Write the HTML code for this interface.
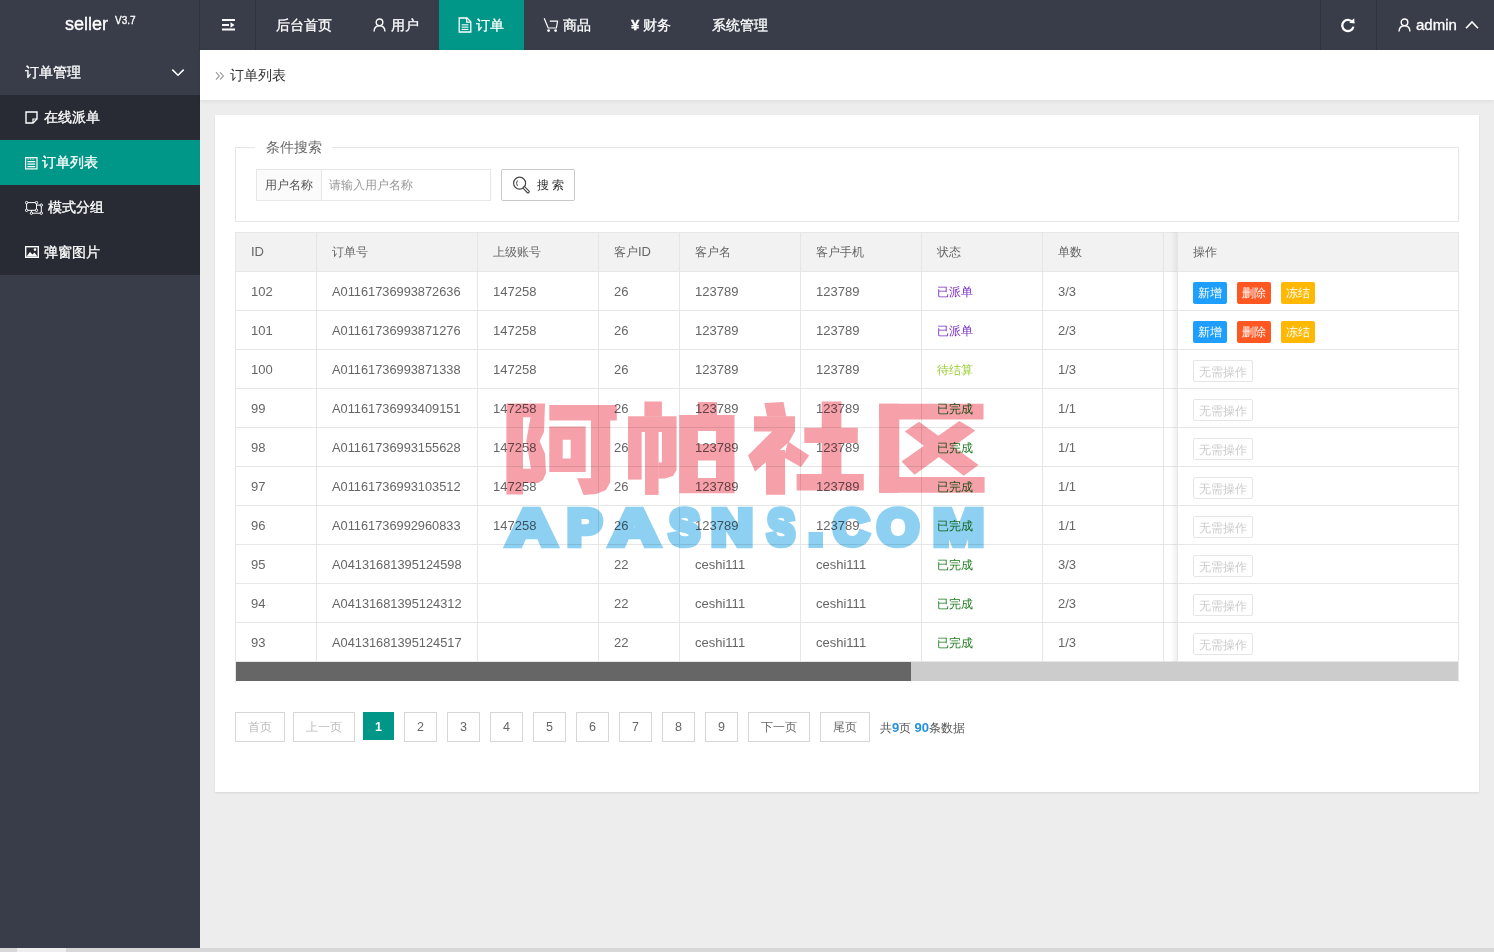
<!DOCTYPE html>
<html><head><meta charset="utf-8">
<style>
*{margin:0;padding:0;box-sizing:border-box}
html,body{width:1494px;height:952px;overflow:hidden}
body{font-family:"Liberation Sans",sans-serif;background:#ededed;position:relative;color:#666;font-size:14px}
div,span,svg{position:absolute}
b{font-weight:normal}
#header{left:0;top:0;width:1494px;height:50px;background:#393D49}
.logo{left:65px;top:0;height:50px;width:120px;color:#fff}
.lg1{left:0;top:13px;font-size:18px;line-height:22px;-webkit-text-stroke:0.35px #fff}
.lg2{left:50px;top:16px;font-size:10px;line-height:10px;-webkit-text-stroke:0.3px #fff}
.hsep{top:0;width:1px;height:50px;background:#30333c}
.nav{top:0;height:50px;line-height:50px;color:#fff;font-size:14px;white-space:nowrap;-webkit-text-stroke:0.3px #fff}
.navact{left:439px;top:0;width:85px;height:50px;background:#009688}
.yen{font-weight:bold;font-size:15px}
.admin{font-size:15px}
.ic{display:block}
#side{left:0;top:50px;width:200px;height:898px;background:#393D49}
.subbg{left:0;top:45px;width:200px;height:180px;background:#282B33}
.sitem{left:0;width:200px;height:45px;line-height:45px;color:#fff;font-size:14px;white-space:nowrap;-webkit-text-stroke:0.3px #fff}
#crumb{left:200px;top:50px;width:1294px;height:50px;background:#fff;box-shadow:0 1px 4px rgba(0,0,0,.08)}
.raquo{left:14px;top:-1px;line-height:50px;font-size:19px;color:#999}
.crt{left:30px;top:0;line-height:50px;font-size:14px;color:#333}
#card{left:215px;top:115px;width:1264px;height:677px;background:#fff;box-shadow:0 1px 2px rgba(0,0,0,.1)}
.fs{left:235px;top:147px;width:1224px;height:75px;border:1px solid #e6e6e6}
.legend{left:255px;top:137px;width:77px;height:20px;line-height:20px;background:#fff;padding-left:11px;font-size:14px;color:#666}
.ilabel{left:256px;top:169px;width:66px;height:32px;line-height:30px;border:1px solid #e6e6e6;background:#fbfbfb;font-size:12px;color:#555;padding-left:8px}
.iinput{left:321px;top:169px;width:170px;height:32px;line-height:30px;border:1px solid #e6e6e6;border-left:none;font-size:12px;color:#999;padding-left:8px}
.sbtn{left:501px;top:169px;width:74px;height:32px;border:1px solid #c9c9c9;border-radius:2px;background:#fff}
.stxt{left:35px;top:0;line-height:30px;font-size:12px;color:#333}
.thead{left:235px;top:232px;width:1224px;height:40px;background:#f2f2f2;border-top:1px solid #e6e6e6;border-bottom:1px solid #e6e6e6}
.th{top:233px;height:38px;line-height:38px;font-size:12px;color:#666;white-space:nowrap}
.lat{font-size:13px}
.td{height:38px;line-height:38px;font-size:13px;color:#666;white-space:nowrap}
.st-p{font-size:12px;color:#7a2fc4}
.st-y{font-size:12px;color:#9acd32}
.st-g{font-size:12px;color:#1e7b1e}
.hl{left:235px;width:1224px;height:1px;background:#e6e6e6}
.vl{top:232px;width:1px;height:430px;background:#e6e6e6}
.fixshadow{left:1177px;top:232px;width:282px;height:430px;border-left:1px solid #e6e6e6}
.fixshadow:before{content:"";position:absolute;left:-7px;top:0;width:6px;height:100%;background:linear-gradient(to left,rgba(0,0,0,.06),rgba(0,0,0,0))}
.tborder{left:235px;top:232px;width:1224px;height:450px;border-left:1px solid #e6e6e6;border-right:1px solid #e6e6e6}
.obtn{width:34px;height:22px;line-height:23px;text-align:center;font-size:12px;color:#fff;border-radius:2px}
.nobtn{width:60px;height:22px;line-height:22px;text-align:center;font-size:12px;color:#ccc;border:1px solid #e6e6e6;border-radius:2px;background:#fff}
.sbar{left:236px;top:662px;width:1222px;height:19px;background:#cccccc}
.sthumb{left:0;top:0;width:675px;height:19px;background:#666}
.pg{top:712px;height:30px;line-height:29px;border:1px solid #d6d6d6;text-align:center;font-size:12.5px;color:#666;background:#fff}
.pcj{font-size:12px}
.pg.dis{color:#bbb}
.pg.cur{background:#009688;color:#fff;border-color:#009688;height:28px;line-height:28px;font-weight:bold}
.pinfo{left:880px;top:713px;line-height:30px;font-size:12px;color:#555;white-space:nowrap}
.pinfo b{position:static;color:#2390e0;font-weight:bold;font-size:13px}
.wm1{left:500px;top:395px;font-size:98px;line-height:100px;font-weight:900;color:#f59aa5;mix-blend-mode:multiply;white-space:nowrap;letter-spacing:2px}
.wm2{left:505px;top:497px;font-size:62px;line-height:62px;font-weight:bold;color:#8fd3f4;mix-blend-mode:multiply;white-space:nowrap}
.hscroll{left:0;top:948px;width:1494px;height:4px;background:#d7d7d7}
.hthumb{left:17px;top:0;width:49px;height:4px;background:#eeeeee}
.td,.th{}
.wm{left:0;top:0;mix-blend-mode:multiply;pointer-events:none}

.ono{font-size:12.8px}

</style></head><body>
<div id="header"><div class="logo"><span class="lg1">seller</span><span class="lg2">V3.7</span></div><div class="hsep" style="left:199px"></div><div class="hsep" style="left:255px"></div><div class="hsep" style="left:1320px"></div><div class="hsep" style="left:1376px"></div><svg class="ic" style="left:221px;top:18px" width="15" height="14" viewBox="0 0 15 14"><rect x="1" y="1" width="13" height="2" fill="#fff"/><rect x="1" y="6" width="7" height="2" fill="#fff"/><path d="M9.5 4.3 L13.5 7 L9.5 9.7 Z" fill="#fff"/><rect x="1" y="10.5" width="13" height="2" fill="#fff"/></svg><div class="nav" style="left:276px">后台首页</div><svg class="ic" style="left:373px;top:18px" width="13" height="14" viewBox="0 0 13 14"><circle cx="6.5" cy="4.3" r="3.3" fill="none" stroke="#fff" stroke-width="1.4"/><path d="M1 13.5 C1.3 9.5 3.5 7.8 6.5 7.8 C9.5 7.8 11.7 9.5 12 13.5" fill="none" stroke="#fff" stroke-width="1.4"/></svg><div class="nav" style="left:391px">用户</div><div class="navact"></div><svg class="ic" style="left:458px;top:17px" width="14" height="16" viewBox="0 0 14 16"><path d="M1.2 1 H9 L12.8 4.8 V15 H1.2 Z" fill="none" stroke="#fff" stroke-width="1.3"/><path d="M8.6 1 V5.2 H12.8" fill="none" stroke="#fff" stroke-width="1.2"/><rect x="3.6" y="7.3" width="6.8" height="1.1" fill="#fff"/><rect x="3.6" y="9.6" width="6.8" height="1.1" fill="#fff"/><rect x="3.6" y="11.9" width="6.8" height="1.1" fill="#fff"/></svg><div class="nav" style="left:476px">订单</div><svg class="ic" style="left:543px;top:17px" width="16" height="16" viewBox="0 0 16 16"><path d="M1.2 1.2 L5.2 11 H13.4 L14.6 4.2 H6.8" fill="none" stroke="#fff" stroke-width="1.2" stroke-linejoin="round"/><circle cx="5.6" cy="13.6" r="1.4" fill="#fff"/><circle cx="12.6" cy="13.6" r="1.4" fill="#fff"/></svg><div class="nav" style="left:563px">商品</div><div class="nav yen" style="left:631px">¥</div><div class="nav" style="left:643px">财务</div><div class="nav" style="left:712px">系统管理</div><svg class="ic" style="left:1340px;top:17px" width="16" height="16" viewBox="0 0 16 16"><path d="M12.6 5.5 A5.6 5.6 0 1 0 13.4 9.6" fill="none" stroke="#fff" stroke-width="2.3"/><path d="M9.2 5.8 L14.6 6.6 L14.2 1.2 Z" fill="#fff"/></svg><svg class="ic" style="left:1398px;top:18px" width="13" height="14" viewBox="0 0 13 14"><circle cx="6.5" cy="4.3" r="3.3" fill="none" stroke="#fff" stroke-width="1.4"/><path d="M1 13.5 C1.3 9.5 3.5 7.8 6.5 7.8 C9.5 7.8 11.7 9.5 12 13.5" fill="none" stroke="#fff" stroke-width="1.4"/></svg><div class="nav admin" style="left:1416px">admin</div><svg class="ic" style="left:1465px;top:20px" width="14" height="10" viewBox="0 0 14 10"><path d="M1 8.3 L7 2 L13 8.3" fill="none" stroke="#fff" stroke-width="1.6"/></svg></div><div id="side"><div class="sitem" style="top:0;background:#393D49"><span style="position:absolute;left:25px">订单管理</span></div><svg class="ic" style="left:171px;top:18px" width="14" height="9" viewBox="0 0 14 9"><path d="M1.3 1.6 L7 7.3 L12.7 1.6" fill="none" stroke="#fff" stroke-width="1.5"/></svg><div class="subbg"></div><div class="sitem" style="top:45px"><svg class="ic" style="left:25px;top:16px" width="13" height="13" viewBox="0 0 13 13"><path d="M1 1 H12 V8 L8 12 H1 Z" fill="none" stroke="#fff" stroke-width="1.4"/><path d="M8 12 V8 H12" fill="none" stroke="#fff" stroke-width="1.2"/></svg><span style="position:absolute;left:44px">在线派单</span></div><div class="sitem" style="top:90px;background:#009688"><svg class="ic" style="left:25px;top:16.5px" width="13" height="13" viewBox="0 0 13 13"><rect x="0.6" y="0.7" width="11.4" height="11.2" fill="none" stroke="#fff" stroke-width="1.2"/><path d="M2.6 2.1 H10" stroke="#fff" stroke-width="1" stroke-dasharray="1.2 1.2"/><path d="M2.4 4.6 H10.2 M2.4 7.1 H10.2 M2.4 9.6 H10.2" stroke="#fff" stroke-width="1.1"/></svg><span style="position:absolute;left:42px">订单列表</span></div><div class="sitem" style="top:135px"><svg class="ic" style="left:25px;top:16px" width="18" height="14" viewBox="0 0 18 14"><path d="M1.6 1.6 H11.5 V9.3 H1.6 Z M11.5 4.1 H16.3 V12.2 H6.4 V9.3" fill="none" stroke="#fff" stroke-width="1"/><g fill="#282B33" stroke="#fff" stroke-width="1"><circle cx="1.6" cy="1.6" r="1.2"/><circle cx="11.5" cy="1.6" r="1.2"/><circle cx="1.6" cy="9.3" r="1.2"/><circle cx="11.5" cy="9.3" r="1.2"/><circle cx="16.3" cy="4.1" r="1.2"/><circle cx="6.4" cy="12.2" r="1.2"/><circle cx="16.3" cy="12.2" r="1.2"/></g></svg><span style="position:absolute;left:48px">模式分组</span></div><div class="sitem" style="top:180px"><svg class="ic" style="left:25px;top:16px" width="14" height="12" viewBox="0 0 14 12"><rect x="0.7" y="0.7" width="12.6" height="10.6" fill="none" stroke="#fff" stroke-width="1.4"/><path d="M1.5 10.5 L5 6 L7.5 8.5 L9.5 6.5 L12.5 10.5 Z" fill="#fff"/><circle cx="10" cy="3.6" r="1.3" fill="#fff"/></svg><span style="position:absolute;left:44px">弹窗图片</span></div></div><div id="crumb"><svg class="ic" style="left:15px;top:21px" width="10" height="10" viewBox="0 0 10 10"><path d="M1 1.2 L4.3 4.9 L1 8.6 M5 1.2 L8.3 4.9 L5 8.6" fill="none" stroke="#999" stroke-width="1.1"/></svg><span class="crt">订单列表</span></div><div id="card"></div><div class="fs"></div><div class="legend">条件搜索</div><div class="ilabel">用户名称</div><div class="iinput">请输入用户名称</div><div class="sbtn"><svg class="ic" style="left:11px;top:6px" width="18" height="18" viewBox="0 0 18 18"><circle cx="6.6" cy="7.2" r="6" fill="none" stroke="#444" stroke-width="1.2"/><path d="M11.3 11.9 L15 15.7" stroke="#444" stroke-width="3.4" stroke-linecap="round"/><path d="M11.3 11.9 L15 15.7" stroke="#fff" stroke-width="1.2" stroke-linecap="round"/><path d="M4.4 4.5 Q2.7 7.2 4.4 9.9" fill="none" stroke="#444" stroke-width="1"/></svg><span class="stxt">搜 索</span></div><div class="thead"></div><div class="th" style="left:251px"><b class="lat">ID</b></div><div class="th" style="left:332px">订单号</div><div class="th" style="left:493px">上级账号</div><div class="th" style="left:614px">客户<b class="lat">ID</b></div><div class="th" style="left:695px">客户名</div><div class="th" style="left:816px">客户手机</div><div class="th" style="left:937px">状态</div><div class="th" style="left:1058px">单数</div><div class="th" style="left:1193px">操作</div><div class="hl" style="top:310px"></div><div class="td" style="left:251px;top:273px">102</div><div class="td ono" style="left:332px;top:273px">A01161736993872636</div><div class="td" style="left:493px;top:273px">147258</div><div class="td" style="left:614px;top:273px">26</div><div class="td" style="left:695px;top:273px">123789</div><div class="td" style="left:816px;top:273px">123789</div><div class="td st-p" style="left:937px;top:273px">已派单</div><div class="td" style="left:1058px;top:273px">3/3</div><div class="obtn" style="left:1193px;top:282px;background:#1E9FFF">新增</div><div class="obtn" style="left:1237px;top:282px;background:#FF5722">删除</div><div class="obtn" style="left:1281px;top:282px;background:#FFB800">冻结</div><div class="hl" style="top:349px"></div><div class="td" style="left:251px;top:312px">101</div><div class="td ono" style="left:332px;top:312px">A01161736993871276</div><div class="td" style="left:493px;top:312px">147258</div><div class="td" style="left:614px;top:312px">26</div><div class="td" style="left:695px;top:312px">123789</div><div class="td" style="left:816px;top:312px">123789</div><div class="td st-p" style="left:937px;top:312px">已派单</div><div class="td" style="left:1058px;top:312px">2/3</div><div class="obtn" style="left:1193px;top:321px;background:#1E9FFF">新增</div><div class="obtn" style="left:1237px;top:321px;background:#FF5722">删除</div><div class="obtn" style="left:1281px;top:321px;background:#FFB800">冻结</div><div class="hl" style="top:388px"></div><div class="td" style="left:251px;top:351px">100</div><div class="td ono" style="left:332px;top:351px">A01161736993871338</div><div class="td" style="left:493px;top:351px">147258</div><div class="td" style="left:614px;top:351px">26</div><div class="td" style="left:695px;top:351px">123789</div><div class="td" style="left:816px;top:351px">123789</div><div class="td st-y" style="left:937px;top:351px">待结算</div><div class="td" style="left:1058px;top:351px">1/3</div><div class="nobtn" style="left:1193px;top:360px">无需操作</div><div class="hl" style="top:427px"></div><div class="td" style="left:251px;top:390px">99</div><div class="td ono" style="left:332px;top:390px">A01161736993409151</div><div class="td" style="left:493px;top:390px">147258</div><div class="td" style="left:614px;top:390px">26</div><div class="td" style="left:695px;top:390px">123789</div><div class="td" style="left:816px;top:390px">123789</div><div class="td st-g" style="left:937px;top:390px">已完成</div><div class="td" style="left:1058px;top:390px">1/1</div><div class="nobtn" style="left:1193px;top:399px">无需操作</div><div class="hl" style="top:466px"></div><div class="td" style="left:251px;top:429px">98</div><div class="td ono" style="left:332px;top:429px">A01161736993155628</div><div class="td" style="left:493px;top:429px">147258</div><div class="td" style="left:614px;top:429px">26</div><div class="td" style="left:695px;top:429px">123789</div><div class="td" style="left:816px;top:429px">123789</div><div class="td st-g" style="left:937px;top:429px">已完成</div><div class="td" style="left:1058px;top:429px">1/1</div><div class="nobtn" style="left:1193px;top:438px">无需操作</div><div class="hl" style="top:505px"></div><div class="td" style="left:251px;top:468px">97</div><div class="td ono" style="left:332px;top:468px">A01161736993103512</div><div class="td" style="left:493px;top:468px">147258</div><div class="td" style="left:614px;top:468px">26</div><div class="td" style="left:695px;top:468px">123789</div><div class="td" style="left:816px;top:468px">123789</div><div class="td st-g" style="left:937px;top:468px">已完成</div><div class="td" style="left:1058px;top:468px">1/1</div><div class="nobtn" style="left:1193px;top:477px">无需操作</div><div class="hl" style="top:544px"></div><div class="td" style="left:251px;top:507px">96</div><div class="td ono" style="left:332px;top:507px">A01161736992960833</div><div class="td" style="left:493px;top:507px">147258</div><div class="td" style="left:614px;top:507px">26</div><div class="td" style="left:695px;top:507px">123789</div><div class="td" style="left:816px;top:507px">123789</div><div class="td st-g" style="left:937px;top:507px">已完成</div><div class="td" style="left:1058px;top:507px">1/1</div><div class="nobtn" style="left:1193px;top:516px">无需操作</div><div class="hl" style="top:583px"></div><div class="td" style="left:251px;top:546px">95</div><div class="td ono" style="left:332px;top:546px">A04131681395124598</div><div class="td" style="left:614px;top:546px">22</div><div class="td" style="left:695px;top:546px">ceshi111</div><div class="td" style="left:816px;top:546px">ceshi111</div><div class="td st-g" style="left:937px;top:546px">已完成</div><div class="td" style="left:1058px;top:546px">3/3</div><div class="nobtn" style="left:1193px;top:555px">无需操作</div><div class="hl" style="top:622px"></div><div class="td" style="left:251px;top:585px">94</div><div class="td ono" style="left:332px;top:585px">A04131681395124312</div><div class="td" style="left:614px;top:585px">22</div><div class="td" style="left:695px;top:585px">ceshi111</div><div class="td" style="left:816px;top:585px">ceshi111</div><div class="td st-g" style="left:937px;top:585px">已完成</div><div class="td" style="left:1058px;top:585px">2/3</div><div class="nobtn" style="left:1193px;top:594px">无需操作</div><div class="hl" style="top:661px"></div><div class="td" style="left:251px;top:624px">93</div><div class="td ono" style="left:332px;top:624px">A04131681395124517</div><div class="td" style="left:614px;top:624px">22</div><div class="td" style="left:695px;top:624px">ceshi111</div><div class="td" style="left:816px;top:624px">ceshi111</div><div class="td st-g" style="left:937px;top:624px">已完成</div><div class="td" style="left:1058px;top:624px">1/3</div><div class="nobtn" style="left:1193px;top:633px">无需操作</div><div class="vl" style="left:316px"></div><div class="vl" style="left:477px"></div><div class="vl" style="left:598px"></div><div class="vl" style="left:679px"></div><div class="vl" style="left:800px"></div><div class="vl" style="left:921px"></div><div class="vl" style="left:1042px"></div><div class="vl" style="left:1163px"></div><div class="fixshadow"></div><div class="tborder"></div><div class="sbar"><div class="sthumb"></div></div><div class="pg dis pcj" style="left:235px;width:50px">首页</div><div class="pg dis pcj" style="left:293px;width:62px">上一页</div><div class="pg cur" style="left:363px;width:31px">1</div><div class="pg " style="left:404px;width:33px">2</div><div class="pg " style="left:447px;width:33px">3</div><div class="pg " style="left:490px;width:33px">4</div><div class="pg " style="left:533px;width:33px">5</div><div class="pg " style="left:576px;width:33px">6</div><div class="pg " style="left:619px;width:33px">7</div><div class="pg " style="left:662px;width:33px">8</div><div class="pg " style="left:705px;width:33px">9</div><div class="pg  pcj" style="left:748px;width:62px">下一页</div><div class="pg  pcj" style="left:820px;width:50px">尾页</div><div class="pinfo">共<b>9</b>页 <b>90</b>条数据</div><svg class="wm" width="1494" height="952" viewBox="0 0 1494 952"><g fill="#f6a0aa" fill-rule="evenodd"><path d="M506.4 403.4 L523.0 403.4 L523.0 494.4 L506.4 494.4 Z"/><path d="M522.5 403.4 L545.0 403.4 L544.0 432.0 L539.6 441.0 L545.0 453.7 L546.0 473.0 L543.0 480.0 L538.0 483.0 L522.5 483.0 L522.5 468.7 L531.0 468.7 L526.3 441.0 L530.5 417.3 L522.5 417.3 Z"/><path d="M549.3 405.0 L616.8 405.0 L616.8 420.5 L549.3 420.5 Z"/><path d="M591.0 420.0 L610.3 420.0 L610.3 482.0 L606.0 490.0 L596.0 494.0 L583.6 495.0 L577.1 478.3 L591.0 478.3 Z"/><path d="M549.3 426.4 L585.7 426.4 L585.7 471.9 L549.3 471.9 Z M562.7 439.8 L562.7 458.5 L570.7 458.5 L570.7 439.8 Z"/><path d="M644.4 401.5 L661.9 401.5 L661.9 416.5 L644.4 416.5 Z"/><path d="M628.0 416.2 L676.6 416.2 L676.6 432.0 L628.0 432.0 Z"/><path d="M628.0 431.5 L641.7 431.5 L641.7 479.6 L628.0 479.6 Z"/><path d="M645.0 431.5 L658.6 431.5 L658.6 494.9 L645.0 494.9 Z"/><path d="M661.9 431.5 L676.6 431.5 L676.6 470.0 L673.0 476.0 L665.0 478.5 L658.3 478.5 L658.3 462.6 L661.9 462.6 Z"/><path d="M697.9 402.0 L717.0 402.0 L717.0 415.5 L697.9 415.5 Z"/><path d="M679.4 415.1 L734.5 415.1 L734.5 493.2 L679.4 493.2 Z M697.9 431.0 L697.9 444.1 L716.0 444.1 L716.0 431.0 Z M697.9 460.5 L697.9 478.0 L716.0 478.0 L716.0 460.5 Z"/><path d="M764.4 403.1 L783.5 402.0 L786.2 416.5 L767.1 416.5 Z"/><path d="M754.0 416.2 L795.0 416.2 L795.0 431.5 L754.0 431.5 Z"/><path d="M772.6 431.0 L795.0 431.0 L789.0 442.0 L755.1 471.4 L748.0 455.5 Z"/><path d="M766.0 450.0 L785.1 450.0 L785.1 494.8 L766.0 494.8 Z"/><path d="M788.0 441.5 L809.2 455.5 L801.0 467.0 L784.0 457.5 Z"/><path d="M821.7 401.5 L841.4 401.5 L841.4 474.6 L821.7 474.6 Z"/><path d="M804.3 427.7 L857.8 427.7 L857.8 443.0 L804.3 443.0 Z"/><path d="M796.6 474.1 L863.8 474.1 L863.8 490.5 L796.6 490.5 Z"/><path d="M879.1 403.7 L983.5 403.7 L983.5 419.5 L879.1 419.5 Z"/><path d="M879.1 403.7 L899.3 403.7 L899.3 492.7 L879.1 492.7 Z"/><path d="M879.1 476.9 L984.6 476.9 L984.6 492.7 L879.1 492.7 Z"/><path d="M904.8 431.5 L919.0 421.7 L978.6 464.9 L963.8 475.8 Z"/><path d="M959.4 421.1 L975.3 430.4 L914.6 474.7 L901.5 461.6 Z"/></g><rect x="808.5" y="532" width="14.5" height="16" fill="#8dd0f1"/><g fill="#8dd0f1" stroke="#8dd0f1" stroke-width="6.5" stroke-linejoin="miter" stroke-miterlimit="3" font-family="Liberation Sans" font-weight="bold" font-size="50.5"><text x="507.2" y="544.8" textLength="48.6" lengthAdjust="spacingAndGlyphs">A</text><text x="567.2" y="544.8" textLength="34.6" lengthAdjust="spacingAndGlyphs">P</text><text x="610.2" y="544.8" textLength="48.6" lengthAdjust="spacingAndGlyphs">A</text><text x="669.2" y="544.8" textLength="30.6" lengthAdjust="spacingAndGlyphs">S</text><text x="711.2" y="544.8" textLength="41.6" lengthAdjust="spacingAndGlyphs">N</text><text x="767.2" y="544.8" textLength="27.6" lengthAdjust="spacingAndGlyphs">S</text><text x="833.2" y="544.8" textLength="35.6" lengthAdjust="spacingAndGlyphs">C</text><text x="877.2" y="544.8" textLength="41.6" lengthAdjust="spacingAndGlyphs">O</text><text x="933.2" y="544.8" textLength="50.6" lengthAdjust="spacingAndGlyphs">M</text></g></svg><div class="hscroll"><div class="hthumb"></div></div></body></html>
